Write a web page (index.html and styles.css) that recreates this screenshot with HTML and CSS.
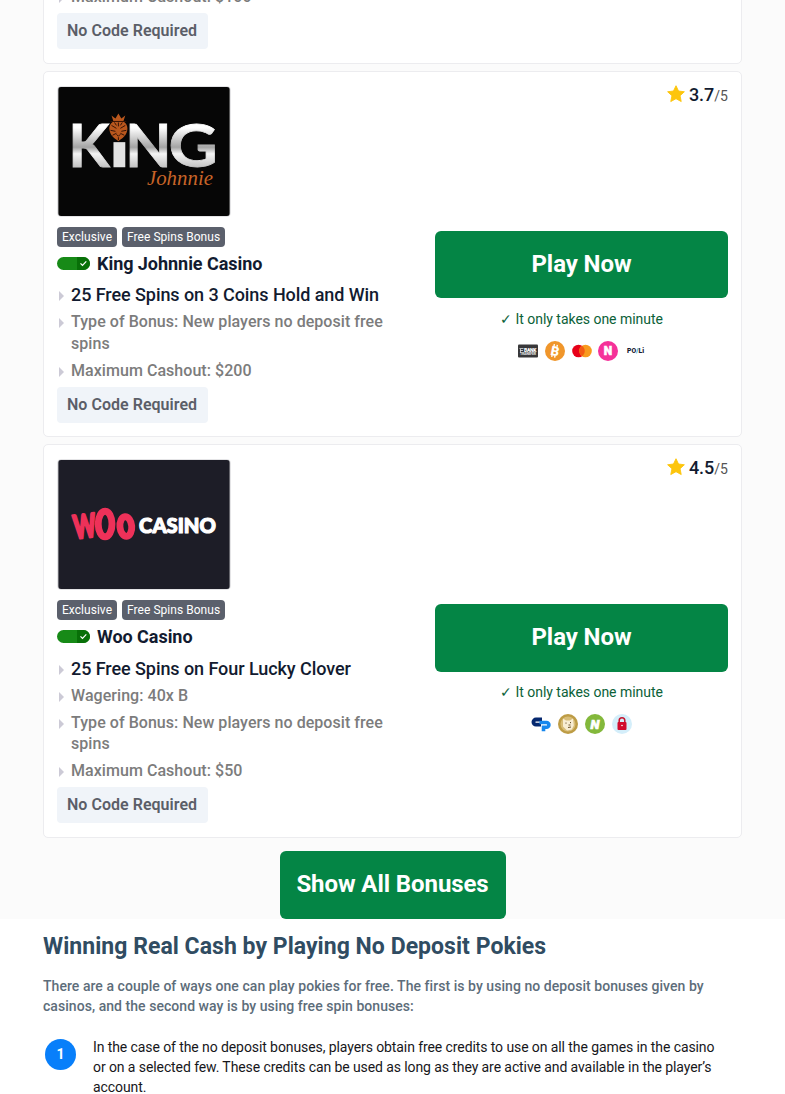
FILE: index.html
```html
<!DOCTYPE html>
<html lang="en">
<head>
  <meta charset="UTF-8">
  <meta name="viewport" content="width=device-width, initial-scale=1">
  <title>No Deposit Pokies</title>
  <link rel="stylesheet" href="styles.css">
</head>
<body>
  <section class="bonuses">
    <article class="card card-first">
      <ul class="terms">
        <li>Maximum Cashout: $100</li>
      </ul>
      <div class="code">No Code Required</div>
    </article>

    <article class="card">
      <div class="info">
        <svg class="logo" viewBox="0 0 174 131" role="img" aria-label="King Johnnie">
          <defs>
            <linearGradient id="silver" gradientUnits="userSpaceOnUse" x1="0" y1="37" x2="0" y2="81">
              <stop offset="0.1" stop-color="#fff"/>
              <stop offset="0.55" stop-color="#a4a4a4"/>
              <stop offset="0.7" stop-color="#f4f4f4"/>
              <stop offset="1" stop-color="#c4c4c4"/>
            </linearGradient>
          </defs>
          <rect width="174" height="131" fill="#060606"/>
          <g class="king" fill="url(#silver)" stroke="url(#silver)">
            <text x="10" y="81" textLength="42" lengthAdjust="spacingAndGlyphs">K</text>
            <text x="68" y="81" textLength="47" lengthAdjust="spacingAndGlyphs">N</text>
            <text x="112" y="81" textLength="50" lengthAdjust="spacingAndGlyphs">G</text>
          </g>
          <rect x="56" y="56" width="12" height="25.500" fill="#e2e2e2"/>
          <path d="M56 35l-2-6 4 3 3-5 3 5 4-3-2 6zM61 34c7 0 10 5 9 10-1 6-5 8-9 11-4-3-8-5-9-11-1-5 2-10 9-10z" fill="#b9571d"/>
          <path d="M54 39l5 3M68 39l-5 3M53 44l5 1M69 44l-5 1M55 49l4-2M67 49l-4-2M61 36v4M59 48l2 2 2-2M61 51v3M57 36l2 3M65 36l-2 3M53 35h16" stroke="#351307" fill="none"/>
          <text class="johnnie" x="90" y="100" textLength="67" lengthAdjust="spacingAndGlyphs">Johnnie</text>
        </svg>
        <div class="tags"><span>Exclusive</span><span>Free Spins Bonus</span></div>
        <div class="name">
          <svg class="toggle" viewBox="0 0 33 13"><rect width="33" height="13" rx="6.500" fill="#178a17"/><path d="M20 0h6.500a6.500 6.500 0 0 1 0 13H20z" fill="#087008"/><path d="M23.500 6.300l2 2 3.800-4" fill="none" stroke="#fff" stroke-width="1.200"/></svg>
          <h3>King Johnnie Casino</h3>
        </div>
        <ul class="terms">
          <li class="offer">25 Free Spins on 3 Coins Hold and Win</li>
          <li>Type of Bonus: New players no deposit free spins</li>
          <li>Maximum Cashout: $200</li>
        </ul>
        <div class="code">No Code Required</div>
      </div>
      <div class="action">
        <div class="rating">
          <svg viewBox="0 0 20 20"><path d="M10 .8l2.800 5.900 6.500.8-4.800 4.400 1.300 6.500L10 15.200l-5.800 3.200 1.300-6.500L.7 7.500l6.500-.8z" fill="#fdc50c" stroke="#fdc50c" stroke-linejoin="round"/></svg>
          <b>3.7</b><span>/5</span>
        </div>
        <a class="play" href="#">Play Now</a>
        <p class="note">✓ It only takes one minute</p>
        <div class="payments">
          <svg viewBox="0 0 20 20"><rect y="3.500" width="20" height="13" rx="1" fill="#38383a"/><path d="M1.500 7.500h4M2 9.500h3M2.500 8v4" stroke="#ddd" stroke-width=".8"/><text x="6" y="10.500" font-size="5" textLength="12.500" fill="#fff">BANK</text><text x="2" y="14" font-size="3.500" textLength="16" fill="#ddd">TRANSFER</text></svg>
          <svg viewBox="0 0 20 20"><circle cx="10" cy="10" r="10" fill="#f0962b"/><g transform="rotate(12 10 10)"><path d="M8 3.500v2M11 3.500v2M8 14.500v2M11 14.500v2" stroke="#fff" stroke-width="1.400"/><text x="10" y="14.700" font-size="13" text-anchor="middle" fill="#fff">B</text></g></svg>
          <svg viewBox="0 0 20 20"><circle cx="6.500" cy="10" r="6.300" fill="#e70019"/><circle cx="13.500" cy="10" r="6.300" fill="#f89b1e"/><path d="M10 4.800a6.300 6.300 0 0 1 0 10.400 6.300 6.300 0 0 1 0-10.400z" fill="#f35b14"/></svg>
          <svg viewBox="0 0 20 20"><circle cx="10" cy="10" r="10" fill="#f53199"/><text x="10" y="14.300" font-size="12" text-anchor="middle" fill="#fff" stroke="#fff" stroke-width=".5">N</text></svg>
          <svg viewBox="0 0 20 20"><text x="2" y="12" font-size="7" textLength="17" lengthAdjust="spacingAndGlyphs" fill="#172033">PO<tspan fill="#18a5d6">/</tspan>Li</text></svg>
        </div>
      </div>
    </article>

    <article class="card">
      <div class="info">
        <svg class="logo" viewBox="0 0 174 131" role="img" aria-label="Woo Casino">
          <rect width="174" height="131" fill="#1d1d27"/>
          <g class="woo">
            <text x="15" y="79" font-size="33" textLength="23" lengthAdjust="spacingAndGlyphs" transform="rotate(-7 25 65)">W</text>
            <ellipse cx="47.500" cy="65" rx="7" ry="13"/>
            <ellipse cx="68.500" cy="67.500" rx="6" ry="10" transform="rotate(-5 69 67)"/>
          </g>
          <text class="casino" x="82" y="74" textLength="78" lengthAdjust="spacingAndGlyphs">CASINO</text>
        </svg>
        <div class="tags"><span>Exclusive</span><span>Free Spins Bonus</span></div>
        <div class="name">
          <svg class="toggle" viewBox="0 0 33 13"><rect width="33" height="13" rx="6.500" fill="#178a17"/><path d="M20 0h6.500a6.500 6.500 0 0 1 0 13H20z" fill="#087008"/><path d="M23.500 6.300l2 2 3.800-4" fill="none" stroke="#fff" stroke-width="1.200"/></svg>
          <h3>Woo Casino</h3>
        </div>
        <ul class="terms">
          <li class="offer">25 Free Spins on Four Lucky Clover</li>
          <li>Wagering: 40x B</li>
          <li>Type of Bonus: New players no deposit free spins</li>
          <li>Maximum Cashout: $50</li>
        </ul>
        <div class="code">No Code Required</div>
      </div>
      <div class="action">
        <div class="rating">
          <svg viewBox="0 0 20 20"><path d="M10 .8l2.800 5.900 6.500.8-4.800 4.400 1.300 6.500L10 15.200l-5.800 3.200 1.300-6.500L.7 7.500l6.500-.8z" fill="#fdc50c" stroke="#fdc50c" stroke-linejoin="round"/></svg>
          <b>4.5</b><span>/5</span>
        </div>
        <a class="play" href="#">Play Now</a>
        <p class="note">✓ It only takes one minute</p>
        <div class="payments">
          <svg viewBox="0 0 20 20"><path d="M11 5.500H5a2.600 2.600 0 0 0 0 5.200H10" fill="none" stroke="#06286f" stroke-width="3.800"/><path d="M8.500 8.500h7a2.400 2.400 0 0 1 0 4.800h-3v4" fill="none" stroke="#1687ed" stroke-width="3.600"/></svg>
          <svg viewBox="0 0 20 20"><circle cx="10" cy="10" r="10" fill="#bd9c45"/><circle cx="10" cy="10" r="7.500" fill="#d8bd78"/><path d="M5 4.500l3 2h4l3-2 .8 7-2 4-4.800 1-4-4z" fill="#f8edd3"/><path d="M8 8.500v1.200M12.500 8v1.200M10.500 11h2M10 13.500l3-.5" stroke="#6c542e"/></svg>
          <svg viewBox="0 0 20 20"><circle cx="10" cy="10" r="10" fill="#83b83b"/><text x="10" y="14.700" font-size="13" font-style="italic" text-anchor="middle" fill="#fff" stroke="#fff" stroke-width=".7">N</text></svg>
          <svg viewBox="0 0 20 20"><circle cx="10" cy="10" r="10" fill="#d4eefa"/><path d="M7.200 9V6.500a2.800 2.800 0 0 1 5.600 0V9" fill="none" stroke="#c4142d" stroke-width="1.500"/><rect x="5.500" y="8" width="9" height="8" rx="1" fill="#d10b2d"/><circle cx="10" cy="11.500" r=".8" fill="#fff"/></svg>
        </div>
      </div>
    </article>

    <a class="show-all" href="#">Show All Bonuses</a>
  </section>

  <section class="article">
    <h2>Winning Real Cash by Playing No Deposit Pokies</h2>
    <p>There are a couple of ways one can play pokies for free. The first is by using no deposit bonuses given by casinos, and the second way is by using free spin bonuses:</p>
    <ol class="steps">
      <li>In the case of the no deposit bonuses, players obtain free credits to use on all the games in the casino or on a selected few. These credits can be used as long as they are active and available in the player’s account.</li>
    </ol>
  </section>
</body>
</html>
```
FILE: styles.css
```css
* { box-sizing: border-box; }
body {
  margin: 0;
  font-family: Roboto, sans-serif;
  background: #fff;
  color: #17171b;
  overflow: hidden;
}
h2, h3, p, ul, ol { margin: 0; padding: 0; }
a { text-decoration: none; }
svg { display: block; }

.bonuses {
  display: flex;
  flex-direction: column;
  height: 919px;
  padding: 0 43px;
  background: #fbfbfb;
  overflow: hidden;
}
.card {
  display: flex;
  justify-content: space-between;
  flex-shrink: 0;
  margin-bottom: 7px;
  padding: 14px 13px 13.3px;
  border: 1px solid #ececef;
  border-radius: 5px;
  background: #fff;
}
.card-first { display: block; margin-top: -29px; padding-bottom: 14px; }
.info { width: 350px; }
.logo {
  width: 174px;
  height: 131px;
  border: 1px solid #e4e4e6;
  border-radius: 4px;
}
.king { font: 700 61px Lato, sans-serif; stroke-width: 0.8; }
.johnnie { font: italic 22px "Liberation Serif", serif; fill: #c86428; }
.woo { fill: #ee3159; font-family: Lato, sans-serif; font-weight: 900; }
.woo text { stroke: #ee3159; stroke-width: 2.5; stroke-linejoin: round; }
.woo ellipse { fill: none; stroke: #ee3159; stroke-width: 7; }
.casino {
  font: 900 21px Lato, sans-serif;
  fill: #fff;
  stroke: #fff;
  stroke-width: 1.2;
  stroke-linejoin: round;
}

.tags { display: flex; gap: 5px; margin-top: 10px; }
.tags span {
  padding: 0 5px;
  border-radius: 4px;
  background: #5b606c;
  color: #fff;
  font-size: 12px;
  line-height: 20px;
  letter-spacing: 0.04px;
}
.name { display: flex; align-items: center; gap: 7px; height: 33px; }
.toggle { width: 33px; height: 13px; }
h3 { font-size: 18px; font-weight: 700; letter-spacing: -0.04px; color: #121b30; }
.terms { list-style: none; }
.terms li {
  position: relative;
  margin-bottom: 5.4px;
  padding-left: 14px;
  color: #7c7c7c;
  font-size: 16px;
  font-weight: 500;
  line-height: 21.6px;
  letter-spacing: 0.05px;
}
.terms li::before {
  content: "";
  position: absolute;
  left: 2px;
  top: 7px;
  border: solid transparent;
  border-width: 5px 0 5px 5px;
  border-left-color: #cccad6;
}
.terms .offer {
  margin-top: 4.5px;
  color: #121b30;
  font-size: 18px;
  letter-spacing: -0.07px;
}
.code {
  width: 151px;
  height: 36px;
  padding-left: 10px;
  border-radius: 4px;
  background: #f0f4f9;
  color: #5b5e68;
  font-size: 16px;
  font-weight: 600;
  line-height: 36px;
  letter-spacing: 0.03px;
}

.action { width: 293px; }
.rating {
  display: flex;
  align-items: baseline;
  justify-content: flex-end;
  height: 145px;
  line-height: 10px;
  color: #555;
  font-size: 14px;
}
.rating svg { width: 18px; height: 18px; margin: -3px 4px 0 0; transform: translateY(2px); }
.rating b { color: #121b30; font-size: 18px; font-weight: 500; }
.play, .show-all {
  display: block;
  height: 67.5px;
  border-radius: 6px;
  background: #048545;
  color: #fff;
  font-size: 24px;
  font-weight: 700;
  line-height: 66px;
  letter-spacing: -0.08px;
  text-align: center;
}
.note {
  margin-top: 10.5px;
  color: #0b6138;
  font-size: 14px;
  line-height: 20px;
  letter-spacing: -0.03px;
  text-align: center;
}
.payments { display: flex; justify-content: center; gap: 6.7px; margin-top: 12px; }
.payments svg { width: 20px; height: 20px; }
.payments text { font-family: Roboto, sans-serif; font-weight: 900; }
.show-all { width: 226px; height: 68px; margin: 6px auto 0; }

.article { padding: 14px 43px 0; }
h2 { color: #304c62; font-size: 23px; font-weight: 700; line-height: 28px; letter-spacing: 0.04px; }
.article p {
  margin-top: 15px;
  color: #5d6d7a;
  font-size: 14px;
  font-weight: 500;
  line-height: 20px;
  letter-spacing: 0.05px;
}
.steps { margin-top: 21px; list-style: none; counter-reset: step; }
.steps li {
  display: flex;
  gap: 17px;
  padding: 0 20px 0 2px;
  font-size: 14px;
  line-height: 20px;
  letter-spacing: -0.09px;
  counter-increment: step;
}
.steps li::before {
  content: counter(step);
  flex: 0 0 31px;
  height: 31px;
  margin-top: 2px;
  border-radius: 50%;
  background: #087ffa;
  color: #fff;
  font-weight: 700;
  line-height: 31px;
  text-align: center;
}
```
